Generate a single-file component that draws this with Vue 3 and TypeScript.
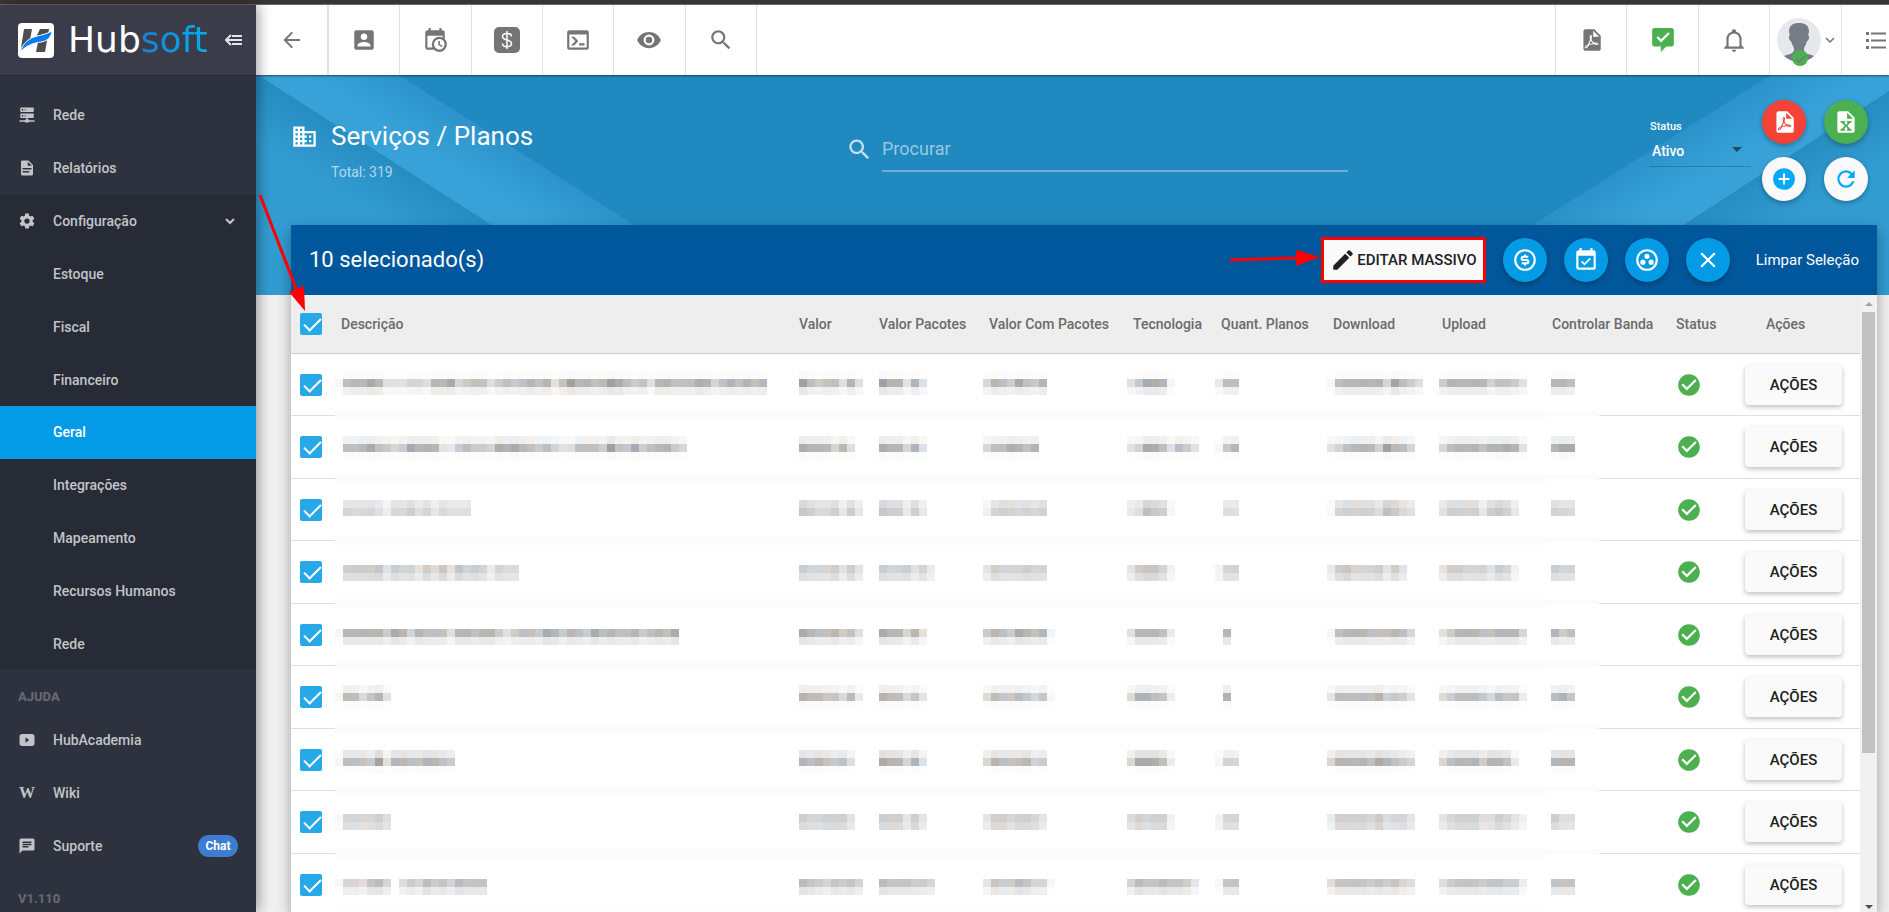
<script setup lang="ts">
import { computed, ref } from 'vue'

interface MenuItem { label: string; icon?: string; active?: boolean; open?: boolean; badge?: string }
interface Column { label: string; cls: string; inset: number }
interface Block { x: number; y: number; fill: string }
interface PlanRow { top: number; bands: number[]; cells: string[] }

const icons: Record<string, string> = {
  back: 'M20,11H7.1L13,5.1L11.6,3.7L3.3,12L11.6,20.3L13,18.9L7.1,13H20V11Z',
  account: 'M6,17C6,15 10,13.9 12,13.9C14,13.9 18,15 18,17V18H6M15,9A3,3 0 0,1 12,12A3,3 0 0,1 9,9A3,3 0 0,1 12,6A3,3 0 0,1 15,9M3,5V19A2,2 0 0,0 5,21H19A2,2 0 0,0 21,19V5A2,2 0 0,0 19,3H5C3.89,3 3,3.9 3,5Z',
  calendarClock: 'M15,13H16.5V15.82L18.94,17.23L18.19,18.53L15,16.69V13M19,8H5V19H9.67C9.24,18.09 9,17.07 9,16A7,7 0 0,1 16,9C17.07,9 18.09,9.24 19,9.67V8M5,21C3.89,21 3,20.1 3,19V5C3,3.89 3.89,3 5,3H6V1H8V3H16V1H18V3H19A2,2 0 0,1 21,5V11.1C22.24,12.36 23,14.09 23,16A7,7 0 0,1 16,23C14.09,23 12.36,22.24 11.1,21H5M16,11.15A4.85,4.85 0 0,0 11.15,16C11.15,18.68 13.32,20.85 16,20.85A4.85,4.85 0 0,0 20.85,16C20.85,13.32 18.68,11.15 16,11.15Z',
  console: 'M20,19V7H4V19H20M20,3A2,2 0 0,1 22,5V19A2,2 0 0,1 20,21H4A2,2 0 0,1 2,19V5C2,3.89 2.9,3 4,3H20M13,17V15H18V17H13M9.58,13L5.57,9H8.4L11.7,12.3C12.09,12.69 12.09,13.33 11.7,13.72L8.42,17H5.59L9.58,13Z',
  eye: 'M12,9A3,3 0 0,0 9,12A3,3 0 0,0 12,15A3,3 0 0,0 15,12A3,3 0 0,0 12,9M12,17A5,5 0 0,1 7,12A5,5 0 0,1 12,7A5,5 0 0,1 17,12A5,5 0 0,1 12,17M12,4.5C7,4.5 2.73,7.61 1,12C2.73,16.39 7,19.5 12,19.5C17,19.5 21.27,16.39 23,12C21.27,7.61 17,4.5 12,4.5Z',
  search: 'M15.5 14h-.79l-.28-.27C15.41 12.59 16 11.11 16 9.5 16 5.91 13.09 3 9.5 3S3 5.91 3 9.5 5.91 16 9.5 16c1.61 0 3.09-.59 4.23-1.57l.27.28v.79l5 4.99L20.49 19l-4.99-5zm-6 0C7.01 14 5 11.99 5 9.5S7.01 5 9.5 5 14 7.01 14 9.5 11.99 14 9.5 14z',
  pdf: 'M14,9H19.5L14,3.5V9M7,2H15L21,8V20A2,2 0 0,1 19,22H7C5.89,22 5,21.1 5,20V4A2,2 0 0,1 7,2M11.93,12.44C12.34,13.34 12.86,14.08 13.46,14.59L13.87,14.91C13,15.07 11.8,15.35 10.53,15.84V15.84L10.42,15.88L10.92,14.84C11.37,13.97 11.7,13.18 11.93,12.44M18.41,16.25C18.59,16.07 18.68,15.84 18.69,15.59C18.72,15.39 18.67,15.2 18.57,15.04C18.28,14.57 17.53,14.35 16.29,14.35L15,14.42L14.13,13.84C13.5,13.32 12.93,12.41 12.53,11.28L12.57,11.14C12.9,9.81 13.21,8.2 12.55,7.54C12.39,7.38 12.17,7.3 11.94,7.3H11.7C11.33,7.3 11,7.69 10.91,8.07C10.54,9.4 10.76,10.13 11.13,11.34V11.35C10.88,12.23 10.56,13.25 10.05,14.28L9.09,16.08L8.2,16.57C7,17.32 6.43,18.16 6.32,18.69C6.28,18.88 6.3,19.05 6.37,19.23L6.4,19.28L6.88,19.59L7.32,19.7C8.13,19.7 9.05,18.75 10.29,16.63L10.47,16.56C11.5,16.23 12.78,16 14.5,15.81C15.53,16.32 16.74,16.55 17.5,16.55C17.94,16.55 18.24,16.44 18.41,16.25M18,15.54L18.09,15.65C18.08,15.75 18.05,15.76 18,15.78H17.96L17.77,15.8C17.31,15.8 16.6,15.61 15.87,15.29C15.96,15.19 16,15.19 16.1,15.19C17.5,15.19 17.9,15.44 18,15.54M8.83,17C8.18,18.19 7.59,18.85 7.14,19C7.19,18.62 7.64,17.96 8.35,17.31L8.83,17M11.85,10.09C11.62,9.19 11.61,8.46 11.78,8.04L11.85,7.92L12,7.97C12.17,8.21 12.19,8.53 12.09,9.07L12.06,9.23L11.9,10.05L11.85,10.09Z',
  excel: 'M14,2H6A2,2 0 0,0 4,4V20A2,2 0 0,0 6,22H18A2,2 0 0,0 20,20V8L14,2M13,9V3.5L18.5,9H13M7,11H11V12.6H10.2L12,14.6L13.8,12.6H13V11H17V12.6H16L13.2,15.5L16,18.4H17V20H13V18.4H13.8L12,16.4L10.2,18.4H11V20H7V18.4H8L10.8,15.5L8,12.6H7V11Z',
  chatCheck: 'M4,1H20A2,2 0 0,1 22,3V16A2,2 0 0,1 20,18H15L10,23V18H4A2,2 0 0,1 2,16V3A2,2 0 0,1 4,1M10.2,14.2L18.2,6.2L16.8,4.8L10.2,11.4L7.4,8.6L6,10L10.2,14.2Z',
  bell: 'M10,21H14A2,2 0 0,1 12,23A2,2 0 0,1 10,21M21,19V20H3V19L5,17V11C5,7.9 7.03,5.17 10,4.29C10,4.19 10,4.1 10,4A2,2 0 0,1 12,2A2,2 0 0,1 14,4C14,4.1 14,4.19 14,4.29C16.97,5.17 19,7.9 19,11V17L21,19M17,11A5,5 0 0,0 12,6A5,5 0 0,0 7,11V18H17V11Z',
  plus: 'M17,13H13V17H11V13H7V11H11V7H13V11H17M12,2A10,10 0 0,0 2,12A10,10 0 0,0 12,22A10,10 0 0,0 22,12A10,10 0 0,0 12,2Z',
  refresh: 'M17.65,6.35C16.2,4.9 14.21,4 12,4A8,8 0 0,0 4,12A8,8 0 0,0 12,20C15.73,20 18.84,17.45 19.73,14H17.65C16.83,16.33 14.61,18 12,18A6,6 0 0,1 6,12A6,6 0 0,1 12,6C13.66,6 15.14,6.69 16.22,7.78L13,11H20V4L17.65,6.35Z',
  pencil: 'M20.71,7.04C21.1,6.65 21.1,6 20.71,5.63L18.37,3.29C18,2.9 17.35,2.9 16.96,3.29L15.12,5.12L18.87,8.87M3,17.25V21H6.75L17.81,9.93L14.06,6.18L3,17.25Z',
  checkCircle: 'M12 2C6.5 2 2 6.5 2 12S6.5 22 12 22 22 17.5 22 12 17.5 2 12 2M10 17L5 12L6.41 10.59L10 14.17L17.59 6.58L19 8L10 17Z',
  calendarCheck: 'M19,19H5V8H19M19,3H18V1H16V3H8V1H6V3H5C3.89,3 3,3.9 3,5V19A2,2 0 0,0 5,21H19A2,2 0 0,0 21,19V5A2,2 0 0,0 19,3M16.53,11.06L15.47,10L10.59,14.88L8.47,12.76L7.41,13.82L10.59,17L16.53,11.06Z',
  groupWork: 'M12,2A10,10 0 1,0 22,12A10,10 0 0,0 12,2M12,4A8,8 0 1,1 4,12A8,8 0 0,1 12,4M12,6.2A2.4,2.4 0 1,0 14.4,8.6A2.4,2.4 0 0,0 12,6.2M8.2,11.6A2.4,2.4 0 1,0 10.6,14A2.4,2.4 0 0,0 8.2,11.6M15.8,11.6A2.4,2.4 0 1,0 18.2,14A2.4,2.4 0 0,0 15.8,11.6Z',
  close: 'M19,6.4L17.6,5L12,10.6L6.4,5L5,6.4L10.6,12L5,17.6L6.4,19L12,13.4L17.6,19L19,17.6L13.4,12L19,6.4Z',
  domain: 'M12 7V3H2v18h20V7H12zM6 19H4v-2h2v2zm0-4H4v-2h2v2zm0-4H4V9h2v2zm0-4H4V5h2v2zm4 12H8v-2h2v2zm0-4H8v-2h2v2zm0-4H8V9h2v2zm0-4H8V5h2v2zm10 12h-8v-2h2v-2h-2v-2h2v-2h-2V9h8v10zm-2-8h-2v2h2v-2zm0 4h-2v2h2v-2z',
  gear: 'M12,15.5A3.5,3.5 0 0,1 8.5,12A3.5,3.5 0 0,1 12,8.5A3.5,3.5 0 0,1 15.5,12A3.5,3.5 0 0,1 12,15.5M19.43,12.97C19.47,12.65 19.5,12.33 19.5,12C19.5,11.67 19.47,11.34 19.43,11L21.54,9.37C21.73,9.22 21.78,8.95 21.66,8.73L19.66,5.27C19.54,5.05 19.27,4.96 19.05,5.05L16.56,6.05C16.04,5.66 15.5,5.32 14.87,5.07L14.5,2.42C14.46,2.18 14.25,2 14,2H10C9.75,2 9.54,2.18 9.5,2.42L9.13,5.07C8.5,5.32 7.96,5.66 7.44,6.05L4.95,5.05C4.73,4.96 4.46,5.05 4.34,5.27L2.34,8.73C2.21,8.95 2.27,9.22 2.46,9.37L4.57,11C4.53,11.34 4.5,11.67 4.5,12C4.5,12.33 4.53,12.65 4.57,12.97L2.46,14.63C2.27,14.78 2.21,15.05 2.34,15.27L4.34,18.73C4.46,18.95 4.73,19.03 4.95,18.95L7.44,17.94C7.96,18.34 8.5,18.68 9.13,18.93L9.5,21.58C9.54,21.82 9.75,22 10,22H14C14.25,22 14.46,21.82 14.5,21.58L14.87,18.93C15.5,18.67 16.04,18.34 16.56,17.94L19.05,18.95C19.27,19.03 19.54,18.95 19.66,18.73L21.66,15.27C21.78,15.05 21.73,14.78 21.54,14.63L19.43,12.97Z',
  document: 'M13,9H18.5L13,3.5V9M6,2H14L20,8V20A2,2 0 0,1 18,22H6C4.89,22 4,21.1 4,20V4C4,2.89 4.89,2 6,2M15,18V16H6V18H15M18,14V12H6V14H18Z',
  server: 'M13,18H14A1,1 0 0,1 15,19H22V21H15A1,1 0 0,1 14,22H10A1,1 0 0,1 9,21H2V19H9A1,1 0 0,1 10,18H11V16H4A1,1 0 0,1 3,15V11A1,1 0 0,1 4,10H20A1,1 0 0,1 21,11V15A1,1 0 0,1 20,16H13V18M4,2H20A1,1 0 0,1 21,3V7A1,1 0 0,1 20,8H4A1,1 0 0,1 3,7V3A1,1 0 0,1 4,2M9,6H10V4H9V6M9,14H10V12H9V14M5,4V6H7V4H5M5,12V14H7V12H5Z',
  video: 'M6,4H18C21,4 22,5 22,8V16C22,19 21,20 18,20H6C3,20 2,19 2,16V8C2,5 3,4 6,4M10,8.5V15.5L15,12L10,8.5Z',
  message: 'M20,2H4A2,2 0 0,0 2,4V22L6,18H20A2,2 0 0,0 22,16V4A2,2 0 0,0 20,2M6,9H18V11H6M14,14H6V12H14M18,8H6V6H18',
}

const mainMenu: MenuItem[] = [
  { label: 'Rede', icon: 'server' },
  { label: 'Relatórios', icon: 'document' },
]
const configMenu: MenuItem[] = [
  { label: 'Configuração', icon: 'gear', open: true },
  { label: 'Estoque' },
  { label: 'Fiscal' },
  { label: 'Financeiro' },
  { label: 'Geral', active: true },
  { label: 'Integrações' },
  { label: 'Mapeamento' },
  { label: 'Recursos Humanos' },
  { label: 'Rede' },
]
const helpMenu: MenuItem[] = [
  { label: 'HubAcademia', icon: 'video' },
  { label: 'Wiki', icon: 'wiki' },
  { label: 'Suporte', icon: 'message', badge: 'Chat' },
]

const shortcuts = [
  { icon: 'account', label: 'Clientes' },
  { icon: 'calendarClock', label: 'Agenda' },
  { icon: 'money', label: 'Financeiro' },
  { icon: 'console', label: 'Terminal' },
  { icon: 'eye', label: 'Visualizar' },
  { icon: 'search', label: 'Pesquisar' },
]

const columns: Column[] = [
  { label: 'Descrição', cls: 'c-desc', inset: 0 },
  { label: 'Valor', cls: 'c-valor', inset: 6 },
  { label: 'Valor Pacotes', cls: 'c-pacotes', inset: 6 },
  { label: 'Valor Com Pacotes', cls: 'c-total', inset: 0 },
  { label: 'Tecnologia', cls: 'c-tec', inset: 0 },
  { label: 'Quant. Planos', cls: 'c-quant', inset: 0 },
  { label: 'Download', cls: 'c-down', inset: 0 },
  { label: 'Upload', cls: 'c-up', inset: 3 },
  { label: 'Controlar Banda', cls: 'c-banda', inset: 5 },
]

/* Hidden values: each digit is the ink density of one 8px block, each band scales it. */
const plans: PlanRow[] = [
  { top: 17, bands: [0.06, 1, 0.25], cells: ['167787333443778456635656767369776798656377666874676767', '96566373', '977373', '476586570', '358871', '266', '167777749653', '57777746653', '776'] },
  { top: 20, bands: [0.22, 1, 0.06], cells: ['06678654587773256554878765643366659658567754787644', '8777473', '877473', '46687670', '348863653', '157', '34677749764', '46777677873', '788'].map((c, i) => (i === 0 ? c.slice(0, 44) : c)) },
  { top: 21, bands: [0.5, 0.75], cells: ['05555425564535444', '76556363', '766363', '256656560', '348761', '044', '15666648754', '4666636763', '655'] },
  { top: 24, bands: [0.68, 0.45], cells: ['07777847664758486763655', '76667474', '7667463', '476667660', '478862', '266', '3786667474', '4776664762', '766'] },
  { top: 25, bands: [1, 0.3], cells: ['1777775874766637767753566587576586766756768', '87667563', '877473', '576587671', '377762', '070', '16777666764', '35777667774', '756'] },
  { top: 19, bands: [0.2, 0.9, 0.06], cells: ['1774683', '87766472', '877463', '476676461', '488762', '080', '37777785653', '45777647662', '786'] },
  { top: 21, bands: [0.35, 1, 0.05], cells: ['166659377667765', '7676563', '877473', '476667450', '488862', '144', '47777687654', '4677757762', '777'] },
  { top: 23, bands: [0.65, 0.5], cells: ['1666675', '7667774', '777474', '477677640', '576772', '266', '37777685664', '46777557642', '755'] },
  { top: 25, bands: [0.8, 0.32], cells: ['1554785046586758777', '87657675', '8777665', '376687551', '587787763', '177', '47777676754', '46777677662', '777'] },
]

function blocks(row: PlanRow, pattern: string): Block[] {
  const out: Block[] = []
  row.bands.forEach((weight, band) => {
    for (let i = 0; i < pattern.length; i++) {
      const density = Number(pattern[i])
      if (density === 0) continue
      const swing = band === 0 ? 0 : ((i * 7 + band * 3) % 5) - 2
      const grey = 255 - density * 10.5 * weight
      const tint = ((i * 5 + density * 3 + band) % 7) - 3
      const r = Math.round(grey + tint * weight * 2 + swing * weight)
      const g = Math.round(grey + swing * weight)
      const b = Math.round(grey - tint * weight * 2 + swing * weight)
      out.push({ x: i * 8, y: row.top + band * 8, fill: `rgb(${Math.min(r, 255)},${Math.min(g, 255)},${Math.min(b, 255)})` })
    }
  })
  return out
}

const rows = plans.map((row) => ({
  cells: row.cells.map((pattern, i) => ({
    cls: columns[i].cls,
    inset: columns[i].inset,
    blocks: blocks(row, pattern),
    width: pattern.length * 8 + columns[i].inset,
  })),
}))

const selected = ref<boolean[]>(plans.map(() => true))
const allSelected = computed({
  get: () => selected.value.every(Boolean),
  set: (value: boolean) => { selected.value = selected.value.map(() => value) },
})
const search = ref('')
const status = ref('Ativo')
</script>

<template>
  <div class="app">
    <div class="window-edge"></div>
    <div class="shell">
      <aside class="sidebar">
        <header class="brand">
          <svg class="brand-mark" viewBox="0 0 36 35" aria-hidden="true">
            <rect width="36" height="35" rx="4" fill="#fff" />
            <path d="M6 6h8l-2 11-9 8zM22 6h9l-4 23h-9l2-10-5 1z" fill="#4d4d4d" />
            <path d="M2 29C5 20 11 15 19 13c5-1 9-2 15-5-1 7-5 10-11 11-7 1-14 3-21 10z" fill="#0a7cf5" stroke="#fff" stroke-width="1" />
          </svg>
          <span class="brand-name">Hub<b>soft</b></span>
          <button class="fold" aria-label="Recolher menu">
            <svg viewBox="0 0 17 12" fill="none" stroke="#e4e5e8" stroke-width="2"><path d="M6 1L1 6l5 5M2 6h15M7 2h10M7 10h10" /></svg>
          </button>
        </header>
        <nav class="menu">
          <ul class="group main-group">
            <li v-for="item in mainMenu" :key="item.label">
              <a href="#"><svg class="mi" viewBox="0 0 24 24"><path :d="icons[item.icon!]" /></svg><span>{{ item.label }}</span></a>
            </li>
          </ul>
          <ul class="group config-group">
            <li v-for="item in configMenu" :key="item.label" :class="{ active: item.active }">
              <a href="#">
                <svg v-if="item.icon" class="mi" viewBox="0 0 24 24"><path :d="icons[item.icon]" /></svg>
                <i v-else class="mi"></i>
                <span>{{ item.label }}</span>
                <svg v-if="item.open" class="caret" viewBox="0 0 10 7" fill="none" stroke="#c5c6cb" stroke-width="2"><path d="M1 1l4 4 4-4" /></svg>
              </a>
            </li>
          </ul>
          <h2 class="menu-title">AJUDA</h2>
          <ul class="group help-group">
            <li v-for="item in helpMenu" :key="item.label">
              <a href="#">
                <i v-if="item.icon === 'wiki'" class="mi wiki" aria-hidden="true">W</i>
                <svg v-else class="mi" viewBox="0 0 24 24"><path :d="icons[item.icon!]" /></svg>
                <span>{{ item.label }}</span>
                <em v-if="item.badge" class="badge">{{ item.badge }}</em>
              </a>
            </li>
          </ul>
          <h2 class="menu-title">V1.110</h2>
        </nav>
      </aside>

      <div class="content">
        <header class="topbar">
          <button class="back" aria-label="Voltar"><svg class="ti" viewBox="0 0 24 24"><path :d="icons.back" /></svg></button>
          <div class="shortcuts">
            <button v-for="s in shortcuts" :key="s.icon" :aria-label="s.label">
              <svg v-if="s.icon === 'money'" class="ti" viewBox="0 0 26 26">
                <rect width="26" height="26" rx="5" />
                <path d="M17.500 9.500c0-2-2-3-4.500-3S8.500 7.500 8.500 9.500 10.500 12.300 13 13s4.500 1.200 4.500 3.500-2 3.200-4.500 3.200-4.500-1-4.500-3.200M13 4v18" fill="none" stroke="#fff" stroke-width="1.500" />
              </svg>
              <svg v-else class="ti" viewBox="0 0 24 24"><path :d="icons[s.icon]" /></svg>
            </button>
          </div>
          <div class="tools">
            <button aria-label="Relatórios PDF"><svg class="ti" viewBox="0 0 24 24"><path :d="icons.pdf" /></svg></button>
            <button aria-label="Mensagens"><svg class="ti green" viewBox="0 0 24 24"><path :d="icons.chatCheck" /></svg></button>
            <button aria-label="Notificações"><svg class="ti" viewBox="0 0 24 24"><path :d="icons.bell" /></svg></button>
            <button class="profile" aria-label="Perfil">
              <svg class="avatar" viewBox="0 0 44 48">
                <defs><clipPath id="face"><circle cx="22" cy="22" r="22" /></clipPath></defs>
                <circle cx="22" cy="22" r="22" fill="#e7e8ed" />
                <path clip-path="url(#face)" d="M12 14C12 7 16 5 22 5s10 2 10 9l-1 3c2 0 1 6-1 6-1 4-3 6-3 8 0 5 5 5 10 7l4 3v5H3v-5l4-3c5-2 10-2 10-7 0-2-2-4-3-8-2 0-3-6-1-6z" fill="#767d86" />
                <circle cx="23" cy="40" r="8" fill="#4caf50" />
                <path d="M19 41l3 3 6-6" fill="none" stroke="#757575" stroke-width="1.500" />
              </svg>
              <svg class="chev" viewBox="0 0 10 6" fill="none" stroke="#757575" stroke-width="1.500"><path d="M1 1l4 4 4-4" /></svg>
            </button>
            <button class="list" aria-label="Lista">
              <svg viewBox="0 0 20 17" fill="#757575"><path d="M0 0h3v3H0zM5 0.500h15v2H5zM0 7h3v3H0zM5 7.500h15v2H5zM0 14h3v3H0zM5 14.500h15v2H5z" /></svg>
            </button>
          </div>
        </header>

        <main class="page">
          <div class="backdrop" aria-hidden="true">
            <svg viewBox="0 0 400 220">
              <defs>
                <linearGradient id="bandL" gradientUnits="userSpaceOnUse" x1="300" y1="96" x2="270" y2="143"><stop offset="0" stop-color="#2b93c9" /><stop offset="1" stop-color="#38a2d8" /></linearGradient>
                <linearGradient id="foldL" gradientUnits="userSpaceOnUse" x1="120" y1="76" x2="90" y2="123"><stop offset="0" stop-color="#268dc2" /><stop offset="1" stop-color="#329cd1" /></linearGradient>
              </defs>
              <path d="M0 0H143L400 164V220H0z" fill="url(#bandL)" />
              <path d="M0 0H2L345 220H0z" fill="url(#foldL)" />
            </svg>
            <svg viewBox="0 0 500 220">
              <defs>
                <linearGradient id="bandR" gradientUnits="userSpaceOnUse" x1="270" y1="70" x2="300" y2="117"><stop offset="0" stop-color="#2b93c9" /><stop offset="1" stop-color="#38a2d8" /></linearGradient>
                <linearGradient id="foldR" gradientUnits="userSpaceOnUse" x1="400" y1="81" x2="430" y2="128"><stop offset="0" stop-color="#268dc2" /><stop offset="1" stop-color="#329cd1" /></linearGradient>
              </defs>
              <path d="M382 0H500V220H32z" fill="url(#bandR)" />
              <path d="M500 16V220H187z" fill="url(#foldR)" />
            </svg>
          </div>

          <section class="page-head">
            <div class="title">
              <svg viewBox="0 0 24 24" aria-hidden="true"><path :d="icons.domain" /></svg>
              <div>
                <h1>Serviços / Planos</h1>
                <p>Total: 319</p>
              </div>
            </div>
            <label class="search">
              <svg viewBox="0 0 24 24" aria-hidden="true"><path :d="icons.search" /></svg>
              <input v-model="search" type="text" placeholder="Procurar" aria-label="Procurar" />
            </label>
            <div class="head-tools">
              <div class="status">
                <label for="status">Status</label>
                <div class="select">
                  <select id="status" v-model="status"><option>Ativo</option><option>Inativo</option></select>
                  <svg viewBox="0 0 10 5" aria-hidden="true"><path d="M0 0h10L5 5z" /></svg>
                </div>
              </div>
              <div class="round-grid">
                <button class="round red" aria-label="Exportar PDF"><svg viewBox="0 0 24 24"><path :d="icons.pdf" /></svg></button>
                <button class="round lime" aria-label="Exportar Excel"><svg viewBox="0 0 24 24"><path :d="icons.excel" /></svg></button>
                <button class="round white" aria-label="Adicionar"><svg viewBox="0 0 24 24"><path :d="icons.plus" /></svg></button>
                <button class="round white" aria-label="Atualizar"><svg viewBox="0 0 24 24"><path :d="icons.refresh" /></svg></button>
              </div>
            </div>
          </section>

          <section class="card">
            <div class="selection">
              <span class="count">10 selecionado(s)</span>
              <div class="bulk">
                <svg class="hint" viewBox="0 0 90 18" aria-hidden="true"><path d="M0 11L67 9" stroke="#f00" stroke-width="3" /><path d="M66 1v16l24-9z" fill="#f00" /></svg>
                <button><svg viewBox="0 0 24 24" aria-hidden="true"><path :d="icons.pencil" /></svg>EDITAR MASSIVO</button>
              </div>
              <div class="round-row">
                <button class="round blue" aria-label="Valores">
                  <svg viewBox="0 0 24 24" class="line"><circle cx="12" cy="12" r="9" /><path d="M15 9h-4.500a1.500 1.500 0 0 0 0 3h3a1.500 1.500 0 0 1 0 3H9M12 7v2M12 15v2" /></svg>
                </button>
                <button class="round blue" aria-label="Agendar"><svg viewBox="0 0 24 24"><path :d="icons.calendarCheck" /></svg></button>
                <button class="round blue" aria-label="Agrupar"><svg viewBox="0 0 24 24"><path fill-rule="evenodd" :d="icons.groupWork" /></svg></button>
                <button class="round blue" aria-label="Fechar"><svg viewBox="0 0 24 24"><path :d="icons.close" /></svg></button>
              </div>
              <button class="clear">Limpar Seleção</button>
            </div>

            <div class="table-area">
              <div class="table-view">
                <table>
                  <thead>
                    <tr>
                      <th class="c-check"><input v-model="allSelected" type="checkbox" aria-label="Selecionar todos" /></th>
                      <th v-for="c in columns" :key="c.label" :class="c.cls">{{ c.label }}</th>
                      <th class="c-status">Status</th>
                      <th class="c-actions">Ações</th>
                    </tr>
                  </thead>
                  <tbody>
                    <tr v-for="(row, r) in rows" :key="r">
                      <td class="c-check"><input v-model="selected[r]" type="checkbox" :aria-label="`Selecionar plano ${r + 1}`" /></td>
                      <td v-for="cell in row.cells" :key="cell.cls" class="masked" :class="cell.cls">
                        <svg :width="cell.width" height="60" shape-rendering="crispEdges" aria-hidden="true">
                          <rect v-for="(b, i) in cell.blocks" :key="i" :x="b.x + cell.inset" :y="b.y" width="8" height="8" :fill="b.fill" />
                        </svg>
                      </td>
                      <td class="c-status"><svg class="ok" viewBox="0 0 24 24" role="img" aria-label="Ativo"><path :d="icons.checkCircle" /></svg></td>
                      <td class="c-actions"><button class="action">AÇÕES</button></td>
                    </tr>
                  </tbody>
                </table>
              </div>
              <div class="scrollbar" aria-hidden="true">
                <svg viewBox="0 0 8 4"><path d="M0 4h8L4 0z" fill="#a3a3a3" /></svg>
                <div class="track"><div class="thumb"></div></div>
                <svg viewBox="0 0 8 4"><path d="M0 0h8L4 4z" fill="#505050" /></svg>
              </div>
            </div>
          </section>
          <svg class="pointer" viewBox="0 0 52 124" aria-hidden="true"><path d="M4 2L41 98" stroke="#f00" stroke-width="3" /><path d="M33 99l15-6 1 25z" fill="#f00" /></svg>
        </main>
      </div>
    </div>
  </div>
</template>

<style>
body { margin: 0; background: #f1f1f1; }
</style>

<style scoped>
* { box-sizing: border-box; }
.app { height: 100vh; display: flex; flex-direction: column; overflow: hidden; font-family: Roboto, "Liberation Sans", sans-serif; font-size: 14px; color: #212121; }
.app button { font-family: inherit; border: 0; background: none; padding: 0; cursor: pointer; }
.window-edge { flex: none; height: 5px; background: #3a3534; border-bottom: 1px solid #6b6867; }
.shell { flex: 1; min-height: 0; display: flex; }

.sidebar { flex: none; width: 256px; background: #2e323e; box-shadow: 3px 0 12px rgba(0, 0, 0, .35); z-index: 3; color: #c3c4c8; overflow: hidden; }
.brand { height: 71px; background: #3a3d49; border-bottom: 1px solid #252833; display: flex; align-items: center; padding: 0 14px 0 18px; }
.brand-mark { width: 36px; height: 35px; flex: none; }
.brand-name { flex: 1; margin-left: 14px; font: 36px/40px "DejaVu Sans", sans-serif; color: #fff; }
.brand-name b { font-weight: 400; color: transparent; background: linear-gradient(90deg, #1b7fd2, #00b0f0); background-clip: text; -webkit-background-clip: text; }
.fold { width: 17px; height: 12px; flex: none; }
.fold svg { display: block; width: 17px; height: 12px; }
.menu { padding-top: 12px; }
.group { list-style: none; margin: 0; padding: 0; display: grid; grid-auto-rows: 1fr; }
.main-group { height: 107px; }
.config-group { height: 475px; background: #272b35; }
.help-group { height: 158px; }
.group a { height: 100%; display: flex; align-items: center; padding: 0 18px; color: inherit; text-decoration: none; font-weight: 500; font-size: 14px; }
.group span { flex: 1; }
.active { background: #039be5; color: #fff; }
.mi { width: 18px; height: 18px; margin-right: 17px; fill: #c3c4c8; flex: none; }
.wiki { font: 700 16px/18px "Liberation Serif", serif; text-align: center; }
.caret { width: 10px; height: 7px; margin-right: 3px; }
.badge { font-style: normal; font-weight: 700; font-size: 12px; line-height: 22px; width: 40px; text-align: center; border-radius: 11px; background: #3c7dd2; color: #fff; }
.menu-title { margin: 0; height: 44px; padding: 10px 18px 0; font-size: 13px; line-height: 34px; font-weight: 700; color: #686b75; }

.content { flex: 1; min-width: 0; display: flex; flex-direction: column; }
.topbar { flex: none; height: 70px; background: #fff; display: flex; z-index: 2; box-shadow: 0 1px 2px rgba(0, 0, 0, .5); clip-path: inset(0 0 -4px 0); }
.topbar button { display: flex; align-items: center; justify-content: center; border-right: 1px solid #e0e0e0; }
.ti { width: 26px; height: 26px; fill: #757575; }
.ti.green { fill: #4caf50; }
.topbar .back { width: 73px; border-right: 2px solid #e0e0e0; }
.back .ti { width: 24px; height: 24px; }
.shortcuts { width: 428px; display: flex; }
.shortcuts button { flex: 1; }
.tools { margin-left: auto; width: 334px; display: flex; border-left: 1px solid #e0e0e0; }
.tools button { flex: 0 0 71px; }
.tools button:nth-child(even) { flex-basis: 72px; }
.tools .profile { gap: 4px; }
.avatar { width: 44px; height: 48px; margin-top: 3px; }
.chev { width: 10px; height: 6px; }
.tools .list { flex: 1; border-right: 0; justify-content: flex-end; padding-right: 3px; }
.list svg { width: 20px; height: 17px; }

.page { flex: 1; min-height: 0; position: relative; display: flex; flex-direction: column; padding: 0 12px 0 35px; }
.backdrop { position: absolute; left: 0; right: 0; top: 0; height: 220px; background: #2089bf; display: flex; justify-content: space-between; z-index: -1; }
.backdrop svg { height: 220px; }
.page-head { flex: none; height: 150px; display: grid; grid-template-columns: 557fr 500fr 529fr; color: #fff; }
.title { display: flex; padding-top: 44px; }
.title svg { width: 27px; height: 27px; fill: #fff; margin: 4px 13px 0 0; }
.title h1 { margin: 0; font-weight: 400; font-size: 26px; line-height: 34px; }
.title p { margin: 11px 0 0; font-size: 14px; line-height: 16px; color: rgba(255, 255, 255, .65); }
.search { height: 42px; margin-top: 55px; display: flex; align-items: center; }
.search svg { width: 27px; height: 27px; margin: 0 9px 4px -2px; fill: rgba(255, 255, 255, .75); flex: none; }
.search input { flex: 1; min-width: 0; height: 42px; padding: 0 0 4px; border: 0; border-bottom: 2px solid rgba(255, 255, 255, .35); background: none; color: #fff; font: 18px Roboto, sans-serif; outline: 0; }
.search input::placeholder { color: rgba(255, 255, 255, .55); opacity: 1; }
.head-tools { display: flex; justify-content: flex-end; gap: 11px; padding: 25px 9px 0 0; }
.status { width: 101px; padding-top: 20px; }
.status label { display: block; font-size: 11px; line-height: 14px; font-weight: 500; }
.select { position: relative; height: 33px; border-bottom: 1px solid rgba(0, 0, 0, .2); }
.select select { appearance: none; width: 100%; height: 33px; border: 0; padding: 0 0 0 2px; background: none; color: #fff; font: 500 14px Roboto, sans-serif; }
.select svg { position: absolute; right: 9px; top: 13px; width: 10px; height: 5px; fill: #1d4c66; pointer-events: none; }
.round-grid { display: grid; grid-template-columns: 44px 44px; grid-auto-rows: 44px; gap: 13px 18px; }
.app .round { width: 44px; height: 44px; border-radius: 50%; display: flex; align-items: center; justify-content: center; box-shadow: 0 2px 5px rgba(0, 0, 0, .3); }
.round svg { width: 26px; height: 26px; fill: #fff; }
.app .red { background: #f44336; }
.app .lime { background: #4caf50; }
.app .white { background: #fafafa; }
.white svg { fill: #03a9f4; }
.app .blue { background: #039be5; }
.round .line { fill: none; stroke: #fff; stroke-width: 2; }

.card { flex: 1; min-height: 0; display: flex; flex-direction: column; background: #fff; box-shadow: 0 6px 14px rgba(0, 0, 0, .35); }
.selection { flex: none; height: 70px; background: #01579b; color: #fff; display: flex; align-items: center; padding: 0 18px; }
.count { flex: 1; font-size: 22px; line-height: 28px; }
.bulk { position: relative; border: 3px solid #f00; background: #fafafa; }
.bulk button { height: 40px; padding: 0 6px; display: flex; align-items: center; gap: 1px; font-size: 15px; font-weight: 500; color: #212121; }
.bulk button svg { width: 26px; height: 26px; fill: #212121; }
.hint { position: absolute; right: calc(100% + 4px); top: 9px; width: 90px; height: 18px; }
.round-row { display: flex; gap: 17px; margin-left: 17px; }
.app .clear { margin-left: 26px; font-size: 15px; color: #fff; }

.table-area { flex: 1; min-height: 0; display: flex; align-items: stretch; overflow: hidden; }
.table-view { flex: 1; min-width: 0; overflow: hidden; }
table { width: 100%; table-layout: fixed; border-collapse: separate; border-spacing: 0; }
th { height: 59px; padding: 0 0 0 6px; background: #eee; border-bottom: 1px solid #ccc; text-align: left; font-size: 14px; font-weight: 500; color: #6b6b6b; white-space: nowrap; }
td { height: 62px; padding: 0; border-bottom: 1px solid #e0e0e0; vertical-align: middle; }
tbody tr:nth-child(even) td { height: 63px; }
.masked { vertical-align: top; border-bottom-color: #fbfbfb; background: linear-gradient(#fbfbfb, #fbfbfb) 0 0 / 100% 4px no-repeat, linear-gradient(#fbfbfb, #fbfbfb) 0 100% / 100% 4px no-repeat; }
tbody tr:first-child .masked { background-size: 0 0, 100% 4px; }
.masked svg { display: block; }
.c-check { width: 44px; }
th.c-check, td.c-check { padding: 0 0 0 9px; }
.c-valor { width: 80px; }
.c-pacotes { width: 110px; }
.c-total { width: 144px; }
.c-tec { width: 88px; }
.c-quant { width: 112px; }
.c-down { width: 109px; }
.c-up { width: 110px; }
.c-banda { width: 124px; }
td.masked.c-banda { border-bottom: 0; background: linear-gradient(90deg, #fbfbfb 53px, transparent 53px) 0 100% / 100% 4px no-repeat, linear-gradient(90deg, transparent 53px, #e0e0e0 53px) 0 100% / 100% 1px no-repeat; }
tbody tr:first-child td.masked.c-banda { background-size: 100% 4px, 100% 1px; }
.c-status { width: 75px; }
td.c-status { padding-left: 6px; }
.c-actions { width: 115px; }
th.c-actions { padding-left: 21px; }
input[type="checkbox"] { appearance: none; display: block; width: 22px; height: 22px; margin: 0; border-radius: 2px; border: 2px solid #757575; }
input[type="checkbox"]:checked { border: 0; background: #26a8e9; overflow: hidden; }
input[type="checkbox"]:checked::after { content: ""; display: block; width: 15px; height: 7px; margin: 5px 0 0 4px; border: solid #fff; border-width: 0 0 2px 2px; transform: rotate(-45deg); }
.ok { display: block; width: 26px; height: 26px; fill: #4caf50; }
.app .action { display: block; width: 97px; height: 40px; border-radius: 4px; background: #fafafa; color: #212121; font-size: 15px; font-weight: 500; box-shadow: 0 2px 5px rgba(0, 0, 0, .26); }
.scrollbar { flex: none; width: 17px; background: #f1f1f1; display: flex; flex-direction: column; align-items: center; }
.scrollbar svg { width: 8px; height: 4px; margin: 7px 0 6px; flex: none; }
.scrollbar svg:last-child { margin: 5px 0 3px; }
.track { flex: 1; width: 13px; }
.thumb { height: 75%; background: #c1c1c1; }
.pointer { position: absolute; left: 0; top: 118px; width: 52px; height: 124px; z-index: 4; }
</style>
